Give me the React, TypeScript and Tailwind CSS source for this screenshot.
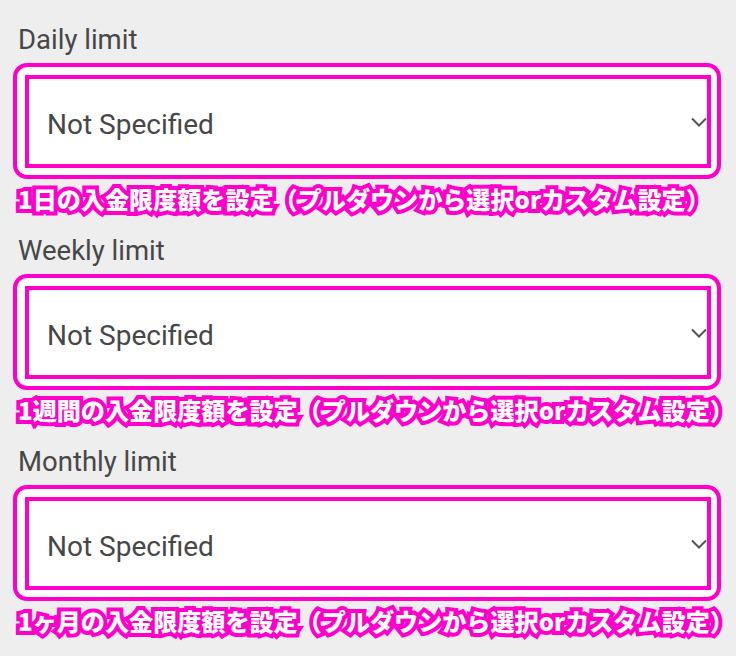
const limits = [
  { label: "Daily limit", note: "1日の入金限度額を設定（プルダウンから選択orカスタム設定）" },
  { label: "Weekly limit", note: "1週間の入金限度額を設定（プルダウンから選択orカスタム設定）" },
  { label: "Monthly limit", note: "1ヶ月の入金限度額を設定（プルダウンから選択orカスタム設定）" },
];

function LimitField({ label, note }: { label: string; note: string }) {
  return (
    <div className="flex flex-col pb-[19px]">
      <label className="ml-[5px] mb-[5px] text-[27.5px] leading-[36px] text-[#474747] font-['Roboto',sans-serif]">
        {label}
      </label>
      {/* annotation frame */}
      <div className="w-[708px] h-[116px] rounded-[14px] border-4 border-[#ff00cc] bg-white pt-[8px] pl-[8px] pr-[6px] pb-[7px]">
        <div className="h-full border-4 border-[#ff00cc] bg-white flex items-center pl-[18px] pt-[7px] overflow-hidden relative">
          <span className="text-[28px] text-[#474747] font-['Roboto',sans-serif]">Not Specified</span>
          <svg className="absolute right-[-2px] top-[38px]" width="18" height="12" viewBox="0 0 18 12" fill="none">
            <path d="M1 1.5 L8 8.5 L15 1.5" stroke="#555" strokeWidth="2" />
          </svg>
        </div>
      </div>
      <p className="w-max mt-[5px] ml-[5px] text-[24.1px] leading-[30px] font-black text-white whitespace-nowrap font-['Noto_Sans_CJK_JP',sans-serif] [-webkit-text-stroke:8px_#ff00cc] [paint-order:stroke_fill]">
        {note}
      </p>
    </div>
  );
}

export default function App() {
  return (
    <div className="min-h-[656px] w-[736px] bg-[#eeeeee] pl-[13px] pt-[22px]">
      {limits.map((l) => (
        <LimitField key={l.label} label={l.label} note={l.note} />
      ))}
    </div>
  );
}
